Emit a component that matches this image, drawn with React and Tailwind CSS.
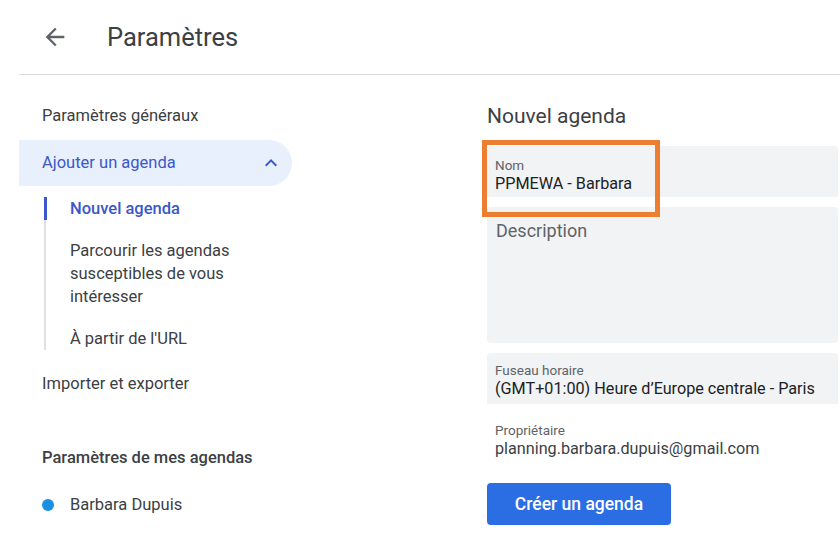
export default function App() {
  return (
    <div className="w-[840px] h-[546px] bg-white overflow-hidden text-[#3c4043]" style={{ fontFamily: 'Roboto, "Liberation Sans", Arial, sans-serif' }}>
      <header className="h-[75px] ml-[19px] border-b border-[#dadce0] flex items-center">
        <div className="w-[88px] flex items-center pl-[22px]">
          <svg width="28" height="28" viewBox="0 0 24 24" fill="#5f6368">
            <path d="M20 11H7.83l5.59-5.59L12 4l-8 8 8 8 1.41-1.41L7.83 13H20v-2z" />
          </svg>
        </div>
        <h1 className="text-[25.5px] leading-[32px] text-[#3c4043] font-normal">Paramètres</h1>
      </header>

      <div className="flex">
        <nav className="w-[292px] shrink-0 pt-[18px] text-[16.5px]">
          <div className="h-[46px] flex items-center pl-[42px]">Paramètres généraux</div>
          <div className="mt-px ml-[19px] h-[46px] rounded-r-full bg-[#e8f0fe] flex items-center justify-between pl-[23px] pr-[9px] text-[#3a58c9]">
            <span>Ajouter un agenda</span>
            <svg width="24" height="24" viewBox="0 0 24 24" fill="#3a58c9">
              <path d="M12 8l-6 6 1.41 1.41L12 10.83l4.59 4.58L18 14z" />
            </svg>
          </div>
          <div className="mt-[11px] ml-[44px] border-l-2 border-[#e0e0e0] flex flex-col gap-[19px] leading-[23px]">
            <div className="-ml-[2px] border-l-[3px] border-[#3a58c9] pl-[23px] text-[#3a58c9] font-medium">Nouvel agenda</div>
            <div className="pl-[24px]">
              Parcourir les agendas
              <br />
              susceptibles de vous
              <br />
              intéresser
            </div>
            <div className="pl-[24px]">À partir de l'URL</div>
          </div>
          <div className="mt-[11px] h-[46px] flex items-center pl-[42px]">Importer et exporter</div>
          <div className="mt-[39px] pl-[42px] leading-[23px] font-medium text-[#3c4043]">Paramètres de mes agendas</div>
          <div className="mt-[24px] pl-[42px] leading-[23px] flex items-center">
            <span className="w-[12px] h-[12px] rounded-full bg-[#1a8fe3] mr-[16px]"></span>
            <span>Barbara Dupuis</span>
          </div>
        </nav>

        <main className="flex-1 ml-[195px] mr-[2px] pt-[27px]">
          <h2 className="text-[21px] leading-[28px] text-[#3c4043] font-normal">Nouvel agenda</h2>

          <div className="relative mt-[16px] h-[51px] bg-[#f1f3f4] rounded-t-[4px] pl-[8px] pt-[11px]">
            <div className="text-[13.5px] leading-[16px] text-[#5f6368]">Nom</div>
            <div className="mt-px text-[16.2px] leading-[20px] text-[#202124]">PPMEWA - Barbara</div>
            <div className="absolute -left-[5px] -top-[6px] w-[178px] h-[77px] border-[5px] border-[#ed7d31]"></div>
          </div>

          <div className="mt-[10px] h-[136px] bg-[#f1f3f4] rounded-[4px] pl-[9px] pt-[13px]">
            <div className="text-[18px] leading-[22px] text-[#5f6368]">Description</div>
          </div>

          <div className="mt-[10px] h-[51px] bg-[#f1f3f4] rounded-t-[4px] pl-[8px] pt-[9px]">
            <div className="text-[13.5px] leading-[16px] text-[#5f6368]">Fuseau horaire</div>
            <div className="mt-px text-[16.2px] leading-[20px] text-[#202124]">(GMT+01:00) Heure d’Europe centrale - Paris</div>
          </div>

          <div className="mt-[18px] pl-[8px]">
            <div className="text-[13.5px] leading-[16px] text-[#5f6368]">Propriétaire</div>
            <div className="mt-px text-[16.2px] leading-[20px] text-[#3c4043]">planning.barbara.dupuis@gmail.com</div>
          </div>

          <button className="mt-[24px] w-[184px] h-[42px] rounded-[4px] bg-[#2b6de3] text-white text-[17.5px] font-medium flex items-center justify-center">
            Créer un agenda
          </button>
        </main>
      </div>
    </div>
  );
}
